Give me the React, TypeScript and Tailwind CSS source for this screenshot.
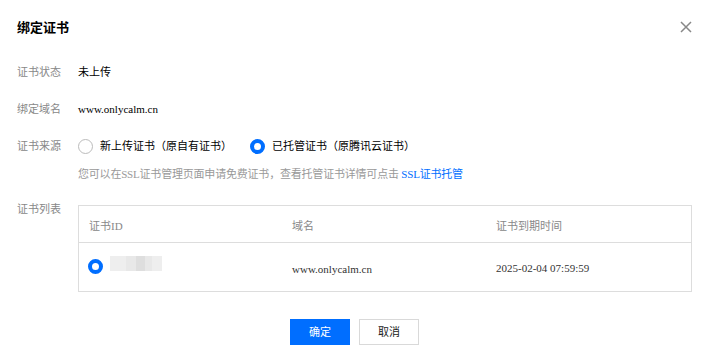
import React from "react";

const font = { fontFamily: '"Liberation Serif", "Noto Sans CJK SC", serif' };

function Radio({ checked }: { checked?: boolean }) {
  return checked ? (
    <span className="inline-block w-[15px] h-[15px] rounded-full border-[4px] border-[#006eff] bg-white box-border shrink-0" />
  ) : (
    <span className="inline-block w-[15px] h-[15px] rounded-full border border-[#bbbbbb] bg-white box-border shrink-0" />
  );
}

export default function App() {
  return (
    <div className="w-[705px] h-[363px] bg-white relative text-[11px] text-black" style={font}>
      <div className="flex items-center justify-between pl-[17px] pr-[13px] pt-[17px] h-[37px]">
        <div className="text-[13px] font-bold leading-[20px]" style={{ fontFamily: '"Noto Sans CJK SC", sans-serif' }}>绑定证书</div>
        <svg width="12" height="12" viewBox="0 0 12 12">
          <path d="M1 1 L11 11 M11 1 L1 11" stroke="#888" strokeWidth="1.5" />
        </svg>
      </div>

      <div className="pl-[17px] pt-[26px] flex flex-col">
        <div className="flex items-center h-[18px]">
          <div className="w-[61px] text-[#888]">证书状态</div>
          <div>未上传</div>
        </div>
        <div className="flex items-center h-[18px] mt-[19px]">
          <div className="w-[61px] text-[#888]">绑定域名</div>
          <div>www.onlycalm.cn</div>
        </div>
        <div className="flex items-center h-[18px] mt-[19px]">
          <div className="w-[61px] text-[#888]">证书来源</div>
          <div className="flex items-center">
            <Radio />
            <span className="ml-[7px]">新上传证书（原自有证书）</span>
            <span className="ml-[18px]" />
            <Radio checked />
            <span className="ml-[7px]">已托管证书（原腾讯云证书）</span>
          </div>
        </div>
        <div className="flex items-center h-[18px] mt-[10px]">
          <div className="w-[61px]" />
          <div className="text-[#999] tracking-[-0.2px]">
            您可以在SSL证书管理页面申请免费证书，查看托管证书详情可点击 <span className="text-[#006eff]">SSL证书托管</span>
          </div>
        </div>
        <div className="flex mt-[17px]">
          <div className="w-[61px] text-[#888] h-[18px] flex items-center">证书列表</div>
          <div className="w-[614px] border border-[#dddddd] mt-[5px]">
            <div className="grid grid-cols-[203px_204px_1fr] h-[37px] items-center pt-[4px] border-b border-[#dddddd] text-[#888]">
              <div className="pl-[10px]">证书ID</div>
              <div className="pl-[10px]">域名</div>
              <div className="pl-[10px]">证书到期时间</div>
            </div>
            <div className="grid grid-cols-[203px_204px_1fr] h-[48px] text-[#333]">
              <div className="pl-[9px] flex items-start pt-[13px]">
                <div className="mt-[3px]"><Radio checked /></div>
                <div className="ml-[7px] flex h-[15px]">
                  <div className="w-[16px] bg-[#eeeeee]" />
                  <div className="w-[10px] bg-[#e8e8e8]" />
                  <div className="w-[9px] bg-[#dedede]" />
                  <div className="w-[7px] bg-[#e8e8e8]" />
                  <div className="w-[10px] bg-[#eeeeee]" />
                </div>
              </div>
              <div className="pl-[10px] flex items-center pt-[5px]">www.onlycalm.cn</div>
              <div className="pl-[10px] flex items-center pt-[3px]">2025-02-04 07:59:59</div>
            </div>
          </div>
        </div>
      </div>

      <div className="flex justify-center gap-[9px] mt-[27px] pl-[4px]">
        <button className="w-[60px] h-[26px] bg-[#006eff] text-white text-[11px]">确定</button>
        <button className="w-[60px] h-[26px] border border-[#d9d9d9] bg-white text-[#222] text-[11px]">取消</button>
      </div>
    </div>
  );
}
